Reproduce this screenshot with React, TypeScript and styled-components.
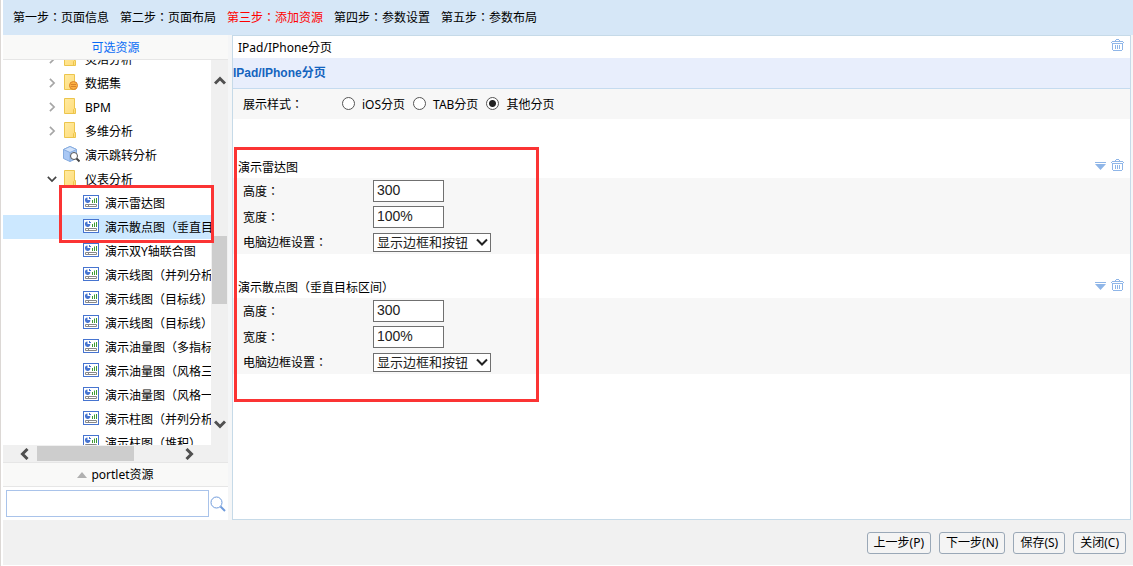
import React from 'react';
import styled, { createGlobalStyle, css } from 'styled-components';

const uiFont = '"Noto Sans", "Noto Sans CJK TC", "Noto Sans CJK SC", sans-serif';

const GlobalStyle = createGlobalStyle`
  * { box-sizing: border-box; }
  body { margin: 0; background: #fff; font: 12px/24px ${uiFont}; color: #000; }
  button, input, select { margin: 0; }
  svg { display: block; flex: none; }
`;

const Page = styled.div`
  display: flex;
  flex-direction: column;
  height: 100vh;
  border-left: 1px solid #dcd8d5;
  padding: 0 0 1px 2px;
  overflow: hidden;
`;

const Steps = styled.nav`
  display: flex;
  flex: none;
  align-items: center;
  gap: 11px;
  height: 35px;
  padding-left: 10px;
  background: #d6e7f7;
`;

const Step = styled.a<{ $current?: boolean }>`
  color: ${p => (p.$current ? '#f00' : '#000')};
  text-decoration: none;
  white-space: nowrap;
`;

const Workspace = styled.div`
  display: flex;
  flex: 1;
  gap: 4px;
  min-height: 0;
  background: #f5f6f7;
`;

const Sidebar = styled.aside`
  position: relative;
  display: flex;
  flex-direction: column;
  flex: none;
  width: 225px;
  background: #fff;
`;

const PanelHeader = styled.div<{ $link?: boolean }>`
  display: flex;
  flex: none;
  align-items: center;
  justify-content: center;
  gap: 4px;
  height: ${p => (p.$link ? 25 : 24)}px;
  padding-top: ${p => (p.$link ? 2 : 0)}px;
  background: #f9f9f8;
  border-bottom: 1px solid #e6e6e6;
  color: ${p => (p.$link ? '#0a6cf5' : '#000')};
`;

const TreeArea = styled.div`
  display: flex;
  flex: 1;
  min-height: 0;
`;

const TreeView = styled.div`
  flex: 1;
  min-width: 0;
  overflow: hidden;
`;

const TreeList = styled.ul`
  margin: -13px 0 0;
  padding: 0;
  list-style: none;
`;

const TreeRow = styled.li<{ $leaf?: boolean; $selected?: boolean }>`
  display: flex;
  align-items: center;
  height: 24px;
  padding-top: 2px;
  padding-left: ${p => (p.$leaf ? 80 : 43)}px;
  background: ${p => (p.$selected ? '#cce8ff' : 'transparent')};
  line-height: 22px;
  white-space: nowrap;
`;

const Toggle = styled.span`
  display: flex;
  flex: none;
  justify-content: center;
  width: 12px;
  margin-right: 5px;
  padding-bottom: 2px;
`;

const IconCell = styled.span`
  flex: none;
  width: 16px;
  margin-right: 6px;
  padding-bottom: 4px;
`;

const VerticalBar = styled.div`
  display: flex;
  flex-direction: column;
  flex: none;
  width: 17px;
  padding: 15px 1px;
  background: #f0f0f0;
  svg { align-self: center; }
`;

const VerticalThumb = styled.div`
  height: 68px;
  margin: 149px 0 auto;
  background: #cdcdcd;
`;

const HorizontalBar = styled.div`
  display: flex;
  flex: none;
  align-items: center;
  height: 18px;
  padding: 0 33px 0 16px;
  background: #f0f0f0;
  border-bottom: 1px solid #e6e6e6;
`;

const HorizontalThumb = styled.div`
  width: 97px;
  height: 15px;
  margin: 0 auto 0 6px;
  background: #cdcdcd;
`;

const SearchRow = styled.form`
  display: flex;
  flex: none;
  align-items: center;
  gap: 1px;
  height: 33px;
  padding: 0 2px 0 3px;
`;

const SearchInput = styled.input`
  flex: 1;
  min-width: 0;
  height: 27px;
  border: 1px solid #a9c3ea;
  padding: 0 4px;
  background: #fff;
  font: 12px ${uiFont};
`;

const IconButton = styled.button`
  border: 0;
  padding: 0;
  background: none;
`;

const Highlight = styled.div`
  position: absolute;
  border: 3px solid #fb3434;
  pointer-events: none;
`;

const SidebarHighlight = styled(Highlight)`
  top: 150px;
  left: 56px;
  width: 155px;
  height: 58px;
`;

const EditorHighlight = styled(Highlight)`
  top: 111px;
  left: 1px;
  width: 305px;
  height: 255px;
`;

const Editor = styled.main`
  position: relative;
  flex: 1;
  min-width: 0;
  margin-right: 2px;
  border: 1px solid #c6dae8;
  background: #fff;
`;

const TitleRow = styled.div<{ $compact?: boolean }>`
  display: flex;
  align-items: center;
  justify-content: space-between;
  height: ${p => (p.$compact ? 22 : 23)}px;
  padding: 2px 6px 0 5px;
`;

const Actions = styled.div`
  display: flex;
  gap: 5px;
  padding-bottom: 6px;
`;

const PageHeading = styled.h1`
  height: 31px;
  margin: 0;
  background: #e8eefc;
  border-bottom: 1px solid #c5dbef;
  color: #1464be;
  font: bold 12px/30px "Liberation Sans", "Noto Sans CJK SC", sans-serif;
`;

const StyleRow = styled.fieldset`
  display: flex;
  align-items: center;
  height: 30px;
  margin: 0 0 36px;
  border: 0;
  padding: 2px 0 0 10px;
  background: #f7f7f7;
`;

const RowLabel = styled.span`
  width: 99px;
`;

const RadioLabel = styled.label`
  display: flex;
  align-items: center;
  gap: 7px;
  margin-right: 8px;
`;

const Radio = styled.input`
  appearance: none;
  width: 13px;
  height: 13px;
  margin-bottom: 4px;
  border: 1px solid #555;
  border-radius: 50%;
  background: #fff;
  &:checked {
    background: radial-gradient(circle, #222 0 3px, #fff 4px);
  }
`;

const Section = styled.section`
  margin-bottom: 21px;
`;

const Fields = styled.div`
  display: flex;
  flex-direction: column;
  height: 76px;
  background: #f7f7f7;
`;

const Field = styled.label`
  display: flex;
  flex: none;
  align-items: center;
  height: 26px;
  padding-left: 10px;
  &:last-child { height: 24px; }
`;

const FieldName = styled.span`
  width: 130px;
  padding-top: 2px;
  line-height: 22px;
`;

const boxed = css`
  border: 1px solid #707070;
  border-radius: 0;
  background: #fff;
  color: #222;
`;

const TextInput = styled.input`
  ${boxed}
  width: 71px;
  height: 22px;
  margin-bottom: 1px;
  padding: 0 3px 1px;
  font: 14px "Liberation Sans", sans-serif;
`;

const SelectWrap = styled.span`
  position: relative;
  svg { position: absolute; right: 3px; top: 3px; pointer-events: none; }
`;

const Select = styled.select`
  ${boxed}
  display: block;
  appearance: none;
  width: 118px;
  height: 19px;
  padding: 0 3px;
  font: 13px/17px "Liberation Sans", "Noto Sans CJK SC", sans-serif;
`;

const Footer = styled.footer`
  display: flex;
  flex: none;
  align-items: center;
  justify-content: flex-end;
  gap: 8px;
  height: 45px;
  padding-right: 7px;
  background: #f1f1f1;
`;

const Button = styled.button`
  height: 22px;
  border: 1px solid #9aa8b7;
  border-radius: 3px;
  padding: 0 6px;
  background: #f4f4f4;
  color: #000;
  font: 12px/20px ${uiFont};
`;

type Direction = 'up' | 'down' | 'left' | 'right';
const turn: Record<Direction, number> = { down: 0, left: 90, up: 180, right: 270 };

const Chevron = ({ dir, size = 12, color = '#505050', width = 3 }: { dir: Direction; size?: number; color?: string; width?: number }) => (
  <svg width={size} height={size} viewBox="0 0 12 12" fill="none" stroke={color} strokeWidth={width}>
    <path d="M1 3.5 6 8.5 11 3.5" transform={`rotate(${turn[dir]} 6 6)`} />
  </svg>
);

const FolderIcon = ({ dataset }: { dataset?: boolean }) => (
  <svg width="16" height="16" viewBox="0 0 16 16">
    <defs>
      <linearGradient id="folder" x2="1" y2="1">
        <stop stopColor="#ffeaa0" />
        <stop offset="1" stopColor="#ffdc7a" />
      </linearGradient>
    </defs>
    <path d="M1.5.5h10v10h1v5h-11z" fill="url(#folder)" stroke="#ecc54c" />
    <path d="M10.5 15.5v-4l1-1" fill="none" stroke="#ecc54c" />
    {dataset && (
      <g fill="#fbb040" stroke="#d9822b">
        <circle cx="10.5" cy="11.5" r="4" />
        <path d="M8 10.5h5M8 12.5h5" />
      </g>
    )}
  </svg>
);

const CubeIcon = () => (
  <svg width="17" height="17" viewBox="0 0 17 17">
    <path d="M.5 3.5 7 .5l6.5 3v9L7 15.500l-6.500-3z" fill="#a9c8f5" stroke="#86acdf" />
    <path d="M.5 3.500 7 6.500l6.500-3L7 .5z" fill="#d2e3fb" stroke="#86acdf" />
    <path d="M7 6.500v9" stroke="#86acdf" />
    <circle cx="11" cy="10" r="3.500" fill="#fff" stroke="#555" />
    <path d="m13.500 12.500 3 3" stroke="#444" strokeWidth="2" />
  </svg>
);

const DashboardIcon = () => (
  <svg width="16" height="14" viewBox="0 0 16 14">
    <rect x=".5" y=".5" width="15" height="13" fill="#fff" stroke="#4674d0" />
    <path d="M4.500 2.500v2.500h2.800a2.700 2.700 0 1 1-2.800-2.500z" fill="#4674d0" />
    <path d="M6 2h1v1h1v1H6z" fill="#4674d0" />
    <path d="M9.500 8V5M11.500 8V3.500M13.500 8V3" stroke="#3d9a33" />
    <path d="M2.500 9.500h11v2h-11zM5.500 9.500v2" fill="#fff" stroke="#888" />
  </svg>
);

const TrashIcon = () => (
  <svg width="13" height="12" viewBox="0 0 13 12" fill="none" stroke="#8fb6e8">
    <path d="M4 1.500h1M8 1.500h1M5 .5h3M1 2.500h11M0 3.500h1M12 3.500h1M1.500 4v7M11.500 4v7M2 11.500h9M4.500 6v4M6.500 6v4M8.500 6v4M2 4.500h9" />
  </svg>
);

const CollapseIcon = () => (
  <svg width="11" height="12" viewBox="0 0 11 12" fill="#8fb6e8">
    <path d="M0 3h11v1H0zM0 5h11L5.500 11z" />
  </svg>
);

const SearchIcon = () => (
  <svg width="16" height="16" viewBox="0 0 16 16" fill="none" stroke="#6f9bdc">
    <circle cx="6.500" cy="6.500" r="5.500" />
    <path d="m10.500 10.500 4.500 4.500" strokeWidth="2" />
  </svg>
);

const folders = [
  { name: '灵活分析' },
  { name: '数据集', dataset: true },
  { name: 'BPM' },
  { name: '多维分析' },
  { name: '演示跳转分析', cube: true },
  { name: '仪表分析', open: true },
];

const dashboards = [
  '演示雷达图',
  '演示散点图（垂直目标区间）',
  '演示双Y轴联合图',
  '演示线图（并列分析）',
  '演示线图（目标线）',
  '演示线图（目标线）',
  '演示油量图（多指标）',
  '演示油量图（风格三）',
  '演示油量图（风格一）',
  '演示柱图（并列分析）',
  '演示柱图（堆积）',
];

const Resource = ({ name }: { name: string }) => (
  <Section>
    <TitleRow>
      <span>{name}</span>
      <Actions>
        <IconButton type="button" aria-label="收起"><CollapseIcon /></IconButton>
        <IconButton type="button" aria-label="删除"><TrashIcon /></IconButton>
      </Actions>
    </TitleRow>
    <Fields>
      <Field>
        <FieldName>高度：</FieldName>
        <TextInput defaultValue="300" />
      </Field>
      <Field>
        <FieldName>宽度：</FieldName>
        <TextInput defaultValue="100%" />
      </Field>
      <Field>
        <FieldName>电脑边框设置：</FieldName>
        <SelectWrap>
          <Select><option>显示边框和按钮</option></Select>
          <Chevron dir="down" color="#222" width={2} />
        </SelectWrap>
      </Field>
    </Fields>
  </Section>
);

export default function App() {
  return (
    <Page>
      <GlobalStyle />
      <Steps>
        <Step href="#info">第一步：页面信息</Step>
        <Step href="#layout">第二步：页面布局</Step>
        <Step href="#resources" $current>第三步：添加资源</Step>
        <Step href="#params">第四步：参数设置</Step>
        <Step href="#param-layout">第五步：参数布局</Step>
      </Steps>
      <Workspace>
        <Sidebar>
          <PanelHeader $link>可选资源</PanelHeader>
          <TreeArea>
            <TreeView>
              <TreeList>
                {folders.map(f => (
                  <TreeRow key={f.name}>
                    <Toggle>
                      {!f.cube && (
                        <Chevron dir={f.open ? 'down' : 'right'} size={10} color={f.open ? '#444' : '#a6a6a6'} width={2} />
                      )}
                    </Toggle>
                    <IconCell>{f.cube ? <CubeIcon /> : <FolderIcon dataset={f.dataset} />}</IconCell>
                    {f.name}
                  </TreeRow>
                ))}
                {dashboards.map((name, i) => (
                  <TreeRow key={i} $leaf $selected={i === 1}>
                    <IconCell><DashboardIcon /></IconCell>
                    {name}
                  </TreeRow>
                ))}
              </TreeList>
            </TreeView>
            <VerticalBar>
              <Chevron dir="up" />
              <VerticalThumb />
              <Chevron dir="down" />
            </VerticalBar>
          </TreeArea>
          <HorizontalBar>
            <Chevron dir="left" />
            <HorizontalThumb />
            <Chevron dir="right" />
          </HorizontalBar>
          <PanelHeader>
            <svg width="10" height="6" viewBox="0 0 10 6" fill="#b0b0b0"><path d="M0 6 5 0l5 6z" /></svg>
            portlet资源
          </PanelHeader>
          <SearchRow>
            <SearchInput aria-label="搜索资源" />
            <IconButton type="button" aria-label="搜索"><SearchIcon /></IconButton>
          </SearchRow>
          <SidebarHighlight />
        </Sidebar>
        <Editor>
          <TitleRow $compact>
            <span>IPad/IPhone分页</span>
            <Actions>
              <IconButton type="button" aria-label="删除"><TrashIcon /></IconButton>
            </Actions>
          </TitleRow>
          <PageHeading>IPad/IPhone分页</PageHeading>
          <StyleRow>
            <RowLabel>展示样式：</RowLabel>
            <RadioLabel><Radio type="radio" name="style" />iOS分页</RadioLabel>
            <RadioLabel><Radio type="radio" name="style" />TAB分页</RadioLabel>
            <RadioLabel><Radio type="radio" name="style" defaultChecked />其他分页</RadioLabel>
          </StyleRow>
          <Resource name="演示雷达图" />
          <Resource name="演示散点图（垂直目标区间）" />
          <EditorHighlight />
        </Editor>
      </Workspace>
      <Footer>
        <Button type="button">上一步(P)</Button>
        <Button type="button">下一步(N)</Button>
        <Button type="button">保存(S)</Button>
        <Button type="button">关闭(C)</Button>
      </Footer>
    </Page>
  );
}
